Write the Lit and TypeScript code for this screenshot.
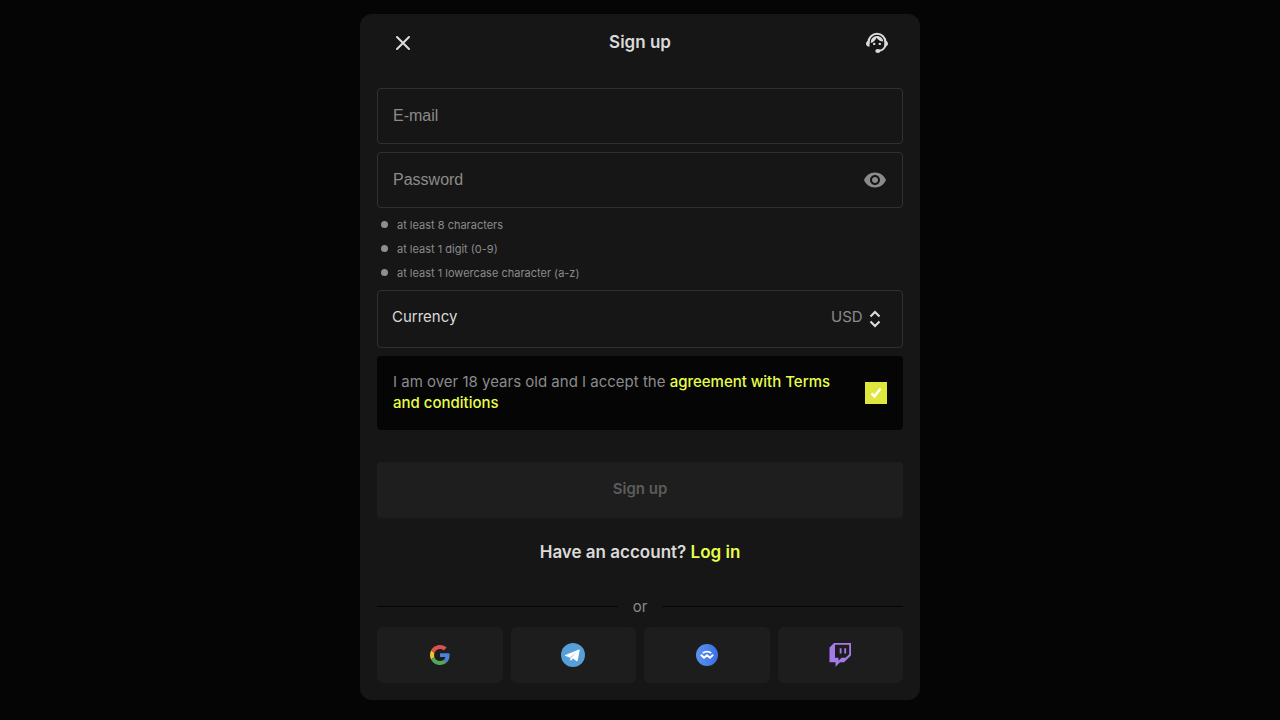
import { LitElement, html, css, svg } from "lit";
import { customElement, state } from "lit/decorators.js";

const closeIcon = svg`
  <svg class="icon" width="24" height="24" viewBox="0 0 24 24" aria-hidden="true">
    <path d="M6 6L18 18M18 6L6 18" fill="none" stroke="#dedede" stroke-width="2" stroke-linecap="round"/>
  </svg>`;

const supportIcon = svg`
  <svg class="icon" width="24" height="24" viewBox="0 0 24 24" aria-hidden="true">
    <path d="M3.500 13V11.300A8.500 8.500 0 0 1 20.500 11.300V13C20.500 16.800 17.800 19.400 14 19.800" fill="none" stroke="#dadada" stroke-width="2"/>
    <path d="M4.500 9.600C2.300 9.800 1 11 1 12.700S2.300 15.600 4.500 15.800ZM19.500 9.600C21.700 9.800 23 11 23 12.700S21.700 15.600 19.500 15.800Z" fill="#dadada"/>
    <path d="M5.800 12C5.600 8 8.300 5 12 5C15.400 5 17.900 7.300 18.300 10.600C15.300 10.500 13 9.200 11.600 6.800C10.500 9.200 8.600 11.200 5.800 12Z" fill="#dadada"/>
    <circle cx="9.200" cy="12.900" r="1.200" fill="#dadada"/>
    <circle cx="14.800" cy="12.900" r="1.200" fill="#dadada"/>
    <ellipse cx="12.800" cy="19.900" rx="2.500" ry="2" fill="#dadada"/>
  </svg>`;

const eyeIcon = svg`
  <svg class="icon" width="24" height="24" viewBox="0 0 24 24" aria-hidden="true">
    <path fill="#8b8b8b" d="M12 4.5C7 4.5 2.73 7.61 1 12c1.73 4.39 6 7.5 11 7.5s9.27-3.11 11-7.5c-1.73-4.39-6-7.5-11-7.5zM12 17c-2.76 0-5-2.24-5-5s2.24-5 5-5 5 2.24 5 5-2.240 5-5 5zm0-8c-1.66 0-3 1.340-3 3s1.340 3 3 3 3-1.340 3-3-1.340-3-3-3z"/>
  </svg>`;

const chevronsIcon = svg`
  <svg class="icon" width="12" height="18" viewBox="0 0 12 18" aria-hidden="true">
    <path d="M1.500 6.500L6 2L10.500 6.500M1.500 11.500L6 16L10.500 11.500" fill="none" stroke="#dedede" stroke-width="2.100"/>
  </svg>`;

const tickIcon = svg`
  <svg class="tick" width="22" height="22" viewBox="0 0 22 22" aria-hidden="true">
    <path d="M6.600 11.300L9.500 14.300L15.600 6.400" fill="none" stroke="#fff" stroke-width="2.400"/>
  </svg>`;

const googleIcon = svg`
  <svg class="icon" width="20" height="20" viewBox="0 0 48 48" aria-hidden="true">
    <path fill="#d9534a" d="M24 9.500c3.540 0 6.710 1.220 9.210 3.600l6.850-6.850C35.900 2.380 30.470 0 24 0 14.620 0 6.510 5.380 2.560 13.220l7.980 6.190C12.430 13.720 17.740 9.500 24 9.500z"/>
    <path fill="#4f80dc" d="M46.980 24.550c0-1.570-.15-3.090-.38-4.550H24v9.020h12.940c-.58 2.960-2.260 5.480-4.780 7.180l7.730 6c4.510-4.180 7.090-10.360 7.090-17.650z"/>
    <path fill="#f0c62e" d="M10.530 28.590c-.48-1.450-.76-2.990-.76-4.590s.27-3.140.76-4.590l-7.980-6.190C.92 16.460 0 20.120 0 24c0 3.880.92 7.540 2.560 10.780l7.970-6.190z"/>
    <path fill="#52a856" d="M24 48c6.480 0 11.930-2.130 15.890-5.810l-7.730-6c-2.150 1.450-4.920 2.300-8.160 2.300-6.260 0-11.570-4.220-13.470-9.910l-7.980 6.190C6.510 42.620 14.620 48 24 48z"/>
  </svg>`;

const telegramIcon = svg`
  <svg class="icon" width="24" height="24" viewBox="0 0 24 24" aria-hidden="true">
    <circle cx="12" cy="12" r="12" fill="#569fd9"/>
    <path d="M4.300 12.100L18 6.500C18.500 6.300 18.800 6.600 18.700 7.200L16.700 17.600C16.500 18.400 16 18.500 15.400 18.100L12 15.600L10.200 17.400C9.800 17.800 9.300 17.600 9.200 17L8.700 14.400L4.500 13.100C3.800 12.900 3.800 12.400 4.300 12.100Z" fill="#fff"/>
    <path d="M8.700 14.300L15.600 9.200L10.500 14.500L9.800 17.400Z" fill="#b7d5ec"/>
  </svg>`;

const walletIcon = svg`
  <svg class="icon" width="22" height="22" viewBox="0 0 22 22" aria-hidden="true">
    <defs>
      <linearGradient id="wallet-fill" x1="0" y1="0" x2="1" y2="0">
        <stop offset="0" stop-color="#5a94ee"/>
        <stop offset="1" stop-color="#3c6ee8"/>
      </linearGradient>
    </defs>
    <circle cx="11" cy="11" r="11" fill="url(#wallet-fill)"/>
    <path d="M6.800 9.100C9.100 7 12.900 7 15.200 9.100" fill="none" stroke="#fff" stroke-width="1.800"/>
    <path d="M4.800 10.800L8.100 13.800L11 11.200L13.900 13.800L17.200 10.800" fill="none" stroke="#fff" stroke-width="1.900" stroke-linejoin="round"/>
  </svg>`;

const twitchIcon = svg`
  <svg class="icon" width="22" height="24" viewBox="0 0 22 24" aria-hidden="true">
    <path fill="#a47bea" fill-rule="evenodd" d="M5 0H22V12.500L15 19.200H11L6.500 23.800V19.200H0.500V4.500ZM6 1.800V14.700H9.500V17.700L12.600 14.700H16.500L20.200 11.200V1.800Z"/>
    <path fill="#a47bea" d="M10.700 5.200H12.500V10.500H10.700ZM15.300 5.200H17.100V10.500H15.300Z"/>
  </svg>`;

const rules = [
  "at least 8 characters",
  "at least 1 digit (0-9)",
  "at least 1 lowercase character (a-z)",
];

const providers = [
  { name: "Google", icon: googleIcon },
  { name: "Telegram", icon: telegramIcon },
  { name: "WalletConnect", icon: walletIcon },
  { name: "Twitch", icon: twitchIcon },
];

@customElement("app-root")
export class AppRoot extends LitElement {
  @state() private email = "";
  @state() private password = "";
  @state() private revealed = false;
  @state() private accepted = true;

  static styles = css`
    :host {
      display: flex;
      justify-content: center;
      align-items: flex-start;
      box-sizing: border-box;
      min-height: 100vh;
      padding: 14px 16px 20px;
      background: #050505;
      color: #dadada;
      font-family: Inter, "Liberation Sans", sans-serif;
      font-size: 15px;
      line-height: 21px;
    }
    * {
      box-sizing: border-box;
    }
    .card {
      width: 100%;
      max-width: 560px;
      padding: 0 17px 17px;
      border-radius: 12px;
      background: #161616;
    }
    .icon {
      display: block;
    }
    button {
      border: 0;
      padding: 0;
      background: none;
      color: inherit;
      font: inherit;
      cursor: pointer;
    }
    a {
      color: #e8ff48;
      font-weight: 500;
      text-decoration: none;
    }
    .header {
      display: flex;
      align-items: center;
      justify-content: space-between;
      height: 58px;
      padding: 0 14px;
      margin-bottom: 16px;
    }
    .title {
      margin: 0;
      padding-bottom: 2px;
      font-size: 17px;
      font-weight: 600;
    }
    .form {
      display: flex;
      flex-direction: column;
    }
    .field {
      display: grid;
      grid-template-columns: 1fr auto;
      align-items: center;
      height: 56px;
      margin-bottom: 8px;
      padding: 0 15px;
      border: 1px solid #303030;
      border-radius: 4px;
      font-family: "Liberation Sans", Arial, sans-serif;
      font-size: 16px;
      color: #8b8b8b;
    }
    .field label,
    .field input {
      grid-area: 1 / 1;
    }
    .field label {
      padding-bottom: 2px;
      pointer-events: none;
    }
    .field input {
      width: 100%;
      height: 100%;
      padding: 0;
      border: 0;
      outline: 0;
      background: none;
      color: #dadada;
      font: inherit;
    }
    .rules {
      margin: -3px 0 5px;
      padding: 0 4px;
      list-style: none;
      font-size: 11px;
      line-height: 24px;
      color: #8b8b8b;
    }
    .rule {
      display: flex;
      align-items: center;
      gap: 9px;
    }
    .rule::before {
      content: "";
      width: 7px;
      height: 7px;
      margin-bottom: 2px;
      border-radius: 50%;
      background: #8f8f8f;
    }
    .currency {
      display: flex;
      align-items: center;
      justify-content: space-between;
      height: 58px;
      margin-bottom: 8px;
      padding: 0 21px 0 14px;
      border: 1px solid #303030;
      border-radius: 4px;
    }
    .currency label,
    .picker select {
      padding: 0 0 5px;
    }
    .picker {
      display: flex;
      align-items: center;
      gap: 6px;
    }
    .picker select {
      appearance: none;
      border: 0;
      outline: 0;
      background: none;
      color: #8b8b8b;
      font: inherit;
    }
    .terms {
      display: flex;
      align-items: center;
      justify-content: space-between;
      gap: 24px;
      margin-bottom: 32px;
      padding: 16px;
      border-radius: 4px;
      background: #050505;
      color: #8b8b8b;
    }
    .terms label {
      margin-top: -1px;
      padding-bottom: 1px;
    }
    .check {
      display: grid;
      flex: none;
    }
    .check input,
    .tick {
      grid-area: 1 / 1;
    }
    .check input {
      appearance: none;
      width: 22px;
      height: 22px;
      margin: 0;
      border: 1px solid #dfe63c;
    }
    .check input:checked {
      background: #dfe63c;
    }
    .tick {
      pointer-events: none;
    }
    .submit {
      height: 56px;
      padding-bottom: 3px;
      border-radius: 4px;
      background: #1e1e1e;
      color: #5c5c5c;
      font-weight: 600;
    }
    .login {
      margin: 24px 0 33px;
      text-align: center;
      font-size: 17px;
      font-weight: 600;
    }
    .login a {
      font-weight: 600;
    }
    .divider {
      display: flex;
      align-items: center;
      gap: 15px;
      margin-bottom: 10px;
      color: #8b8b8b;
    }
    .divider::before,
    .divider::after {
      content: "";
      flex: 1;
      height: 1px;
      background: #050505;
    }
    .providers {
      display: grid;
      grid-template-columns: repeat(4, 1fr);
      gap: 8px;
    }
    .provider {
      display: grid;
      place-items: center;
      height: 56px;
      border-radius: 6px;
      background: #1d1d1d;
    }
  `;

  render() {
    return html`
      <main class="card">
        <header class="header">
          <button type="button" aria-label="Close">${closeIcon}</button>
          <h1 class="title">Sign up</h1>
          <button type="button" aria-label="Support">${supportIcon}</button>
        </header>
        <form class="form" @submit=${(e: Event) => e.preventDefault()}>
          <div class="field">
            <label for="email" ?hidden=${this.email !== ""}>E-mail</label>
            <input id="email" type="email" autocomplete="email"
              @input=${(e: Event) => (this.email = (e.target as HTMLInputElement).value)} />
          </div>
          <div class="field">
            <label for="password" ?hidden=${this.password !== ""}>Password</label>
            <input id="password" type=${this.revealed ? "text" : "password"} autocomplete="new-password"
              @input=${(e: Event) => (this.password = (e.target as HTMLInputElement).value)} />
            <button type="button" aria-label="Show password"
              @click=${() => (this.revealed = !this.revealed)}>${eyeIcon}</button>
          </div>
          <ul class="rules">
            ${rules.map((rule) => html`<li class="rule">${rule}</li>`)}
          </ul>
          <div class="currency">
            <label for="currency">Currency</label>
            <span class="picker">
              <select id="currency"><option>USD</option></select>
              ${chevronsIcon}
            </span>
          </div>
          <div class="terms">
            <label for="terms">I am over 18 years old and I accept the
              <a href="#terms">agreement with Terms and conditions</a></label>
            <span class="check">
              <input id="terms" type="checkbox" .checked=${this.accepted}
                @change=${(e: Event) => (this.accepted = (e.target as HTMLInputElement).checked)} />
              ${this.accepted ? tickIcon : ""}
            </span>
          </div>
          <button class="submit" type="submit" disabled>Sign up</button>
        </form>
        <p class="login">Have an account? <a href="#login">Log in</a></p>
        <div class="divider">or</div>
        <div class="providers">
          ${providers.map(
            (p) => html`<button class="provider" type="button" aria-label=${p.name}>${p.icon}</button>`
          )}
        </div>
      </main>
    `;
  }
}
